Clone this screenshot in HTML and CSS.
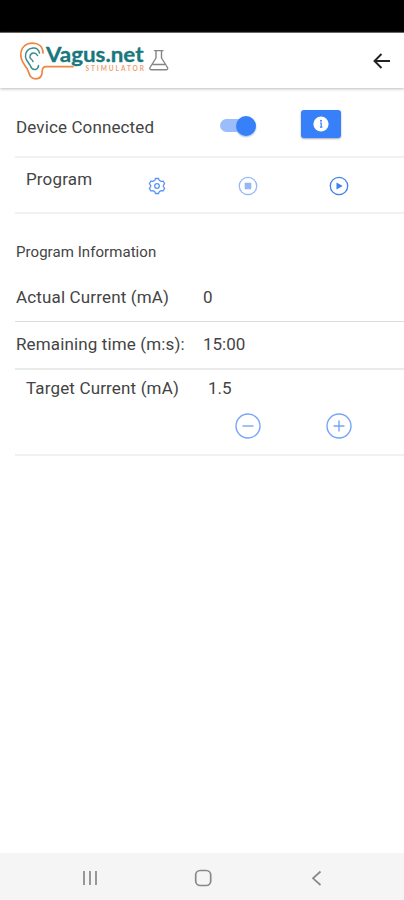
FILE: index.html
```html
<!DOCTYPE html>
<html lang="en">
<head>
<meta charset="utf-8">
<title>Vagus.net Stimulator</title>
<link rel="stylesheet" href="styles.css">
</head>
<body>
<div class="status"></div>
<header class="header">
  <svg class="logo" width="154" height="46" viewBox="18 38 154 46" role="img" aria-label="Vagus.net Stimulator">
    <g fill="none" stroke-linecap="round" stroke-linejoin="round">
      <path stroke="#ee8745" stroke-width="1.7" d="M43 53C43 46.500 38.500 43.200 32.500 43.200C25 43.200 20.800 48 20.800 55C20.800 61 24.500 64.500 27 68.500C29.500 72.500 29 78.800 35.500 78.800C41 78.800 42.200 74.500 42.200 71.500C42.200 68.500 43 66.600 46 66.600H73"/>
      <path stroke="#3b8c91" stroke-width="1.500" d="M39.500 53C38.500 49 36 47.700 33 48C27.500 48.500 25 52.500 25.500 57C26 61 29 62.500 30.500 66C31.500 69 33 70 35.500 69.500C37.500 69 38.500 67.500 38.500 65.500M37.500 55.500C35.500 51.800 31 52.500 30 56C29 59 32 58.500 33 61.500"/>
      <path stroke="#858585" stroke-width="1.400" d="M154.500 50.600H163M156 51V58L150 67.500Q149.200 69.800 151.500 69.800H166Q168.300 69.800 167.500 67.500L161.500 58V51M153 64.500H164.500"/>
    </g>
    <text class="logo-name" x="46" y="61.700" textLength="97.500" lengthAdjust="spacingAndGlyphs">Vagus.net</text>
    <text class="logo-sub" x="85.500" y="70.600" textLength="58.500">STIMULATOR</text>
  </svg>
  <svg class="back" width="18" height="18" viewBox="0 0 18 18"><path d="M17 9H2M8.500 2L1.500 9L8.500 16"/></svg>
</header>
<main>
  <section class="row device">
    <span class="t device-label">Device Connected</span>
    <span class="toggle"><span class="thumb"></span></span>
    <span class="info"><svg width="16" height="16" viewBox="0 0 16 16"><circle cx="8" cy="8" r="7.600" fill="#fff"/><path d="M7 7H8.200V11M7 11.200H9.400" fill="none" stroke="#387ffa" stroke-width="1.200"/><circle cx="8" cy="4.700" r="1" fill="#387ffa"/></svg></span>
  </section>
  <section class="row program">
    <span class="t program-label">Program</span>
    <svg class="icon gear" width="18" height="18" viewBox="0 0 18 18"><path d="M7.500 1.500H10.500L11.300 3.400L13 4.400L15.200 4.200L16.600 6.800L15.300 8.400V9.600L16.600 11.200L15.200 13.800L13 13.600L11.300 14.600L10.500 16.500H7.500L6.700 14.600L5 13.600L2.800 13.800L1.400 11.200L2.700 9.600V8.400L1.400 6.800L2.800 4.200L5 4.400L6.700 3.400Z"/><circle cx="9" cy="9" r="2.300"/></svg>
    <svg class="icon stop" width="20" height="20" viewBox="0 0 20 20"><circle cx="10" cy="10" r="8.700"/><rect class="solid" x="6.700" y="6.700" width="6.600" height="6.600" rx=".7"/></svg>
    <svg class="icon play" width="20" height="20" viewBox="0 0 20 20"><circle cx="10" cy="10" r="8.700"/><path class="solid" d="M7.500 6.400V13.600L13.700 10Z"/></svg>
  </section>
  <h2 class="t heading">Program Information</h2>
  <section class="row actual"><span class="t actual-label">Actual Current (mA)</span><span class="t">0</span></section>
  <section class="row remaining"><span class="t remaining-label">Remaining time (m:s):</span><span class="t time">15:00</span></section>
  <section class="row target">
    <div class="target-line"><span class="t target-label">Target Current (mA)</span><span class="t">1.5</span></div>
    <div class="steps">
      <svg class="icon step" width="26" height="26" viewBox="0 0 26 26"><circle cx="13" cy="13" r="12"/><path d="M7.500 13H18.500"/></svg>
      <svg class="icon step" width="26" height="26" viewBox="0 0 26 26"><circle cx="13" cy="13" r="12"/><path d="M7.500 13H18.500M13 7.500V18.500"/></svg>
    </div>
  </section>
</main>
<nav class="nav">
  <svg width="18" height="18" viewBox="0 0 18 18"><path d="M3 2V16M9 2V16M15 2V16"/></svg>
  <svg width="18" height="18" viewBox="0 0 18 18"><rect x="1.700" y="1.500" width="15" height="15" rx="4.500"/></svg>
  <svg width="18" height="18" viewBox="0 0 18 18"><path d="M13.500 2.500L6 9.300L13.500 16"/></svg>
</nav>
</body>
</html>
```

FILE: styles.css
```css
* { box-sizing: border-box; }
body {
  margin: 0;
  height: 900px;
  display: flex;
  flex-direction: column;
  background: #fff;
  color: #444;
  font-family: Roboto, "Liberation Sans", sans-serif;
  font-size: 17px;
}
svg { display: block; flex: none; }
.status { height: 33px; background: #000; border-bottom: 1px solid #555; }
.header {
  height: 55px;
  display: flex;
  align-items: flex-start;
  justify-content: space-between;
  padding: 5px 13px 0 18px;
  box-shadow: 0 1px 3px #bbb;
}
.logo-name { font-family: Lato, sans-serif; font-weight: 700; font-size: 20px; fill: #19777e; stroke: #19777e; stroke-width: .3px; }
.logo-sub { font-family: Lato, sans-serif; font-weight: 700; font-size: 6.500px; fill: #efa070; }
.back { margin-top: 14px; fill: none; stroke: #222; stroke-width: 1.900; }
main { flex: 1; padding-left: 15px; }
.row { display: flex; border-bottom: 2px solid #f1f1f1; }
.t { line-height: 20px; white-space: nowrap; }
.device { height: 70px; padding-top: 22px; }
.device-label { width: 205px; padding: 7px 0 0 1px; letter-spacing: .12px; }
.toggle { width: 30px; height: 13px; margin: 9px 51px 0 0; border-radius: 7px; background: #9cbdfb; display: flex; align-items: center; }
.thumb { flex: none; width: 20px; height: 20px; margin-left: 16px; border-radius: 50%; background: #3880fa; box-shadow: 0 1px 2px #9db5df; }
.info { width: 40px; height: 28px; border-radius: 3px; background: #3880fa; box-shadow: 0 1px 2px #aab; display: flex; align-items: center; justify-content: center; }
.program { height: 56px; padding: 11px 0 0 11px; }
.program-label { width: 122px; letter-spacing: .15px; }
.icon { fill: none; stroke: #407fec; stroke-width: 1.300; }
.solid { fill: #407fec; stroke: none; }
.gear { margin: 8px 72px 0 0; stroke: #5b93f5; }
.stop { margin: 7px 71px 0 0; opacity: .55; }
.play { margin-top: 7px; }
.heading { margin: 28px 0 0 1px; font-size: 15px; font-weight: 400; letter-spacing: .06px; }
.actual { height: 60px; padding: 25px 0 0 1px; border-bottom: 1px solid #ddd; }
.actual-label { width: 187px; letter-spacing: .15px; }
.remaining { height: 48px; padding: 12px 0 0 1px; border-bottom-color: #eaeaea; }
.remaining-label { width: 187px; letter-spacing: .13px; }
.target { height: 86px; padding: 8px 0 0 11px; flex-direction: column; }
.target-line { display: flex; }
.target-label { width: 182px; letter-spacing: .15px; }
.steps { display: flex; gap: 65px; padding: 15px 0 0 209px; }
.step { stroke: #75a5f8; stroke-width: 1.400; }
.nav {
  height: 47px;
  display: flex;
  align-items: center;
  gap: 95px;
  padding: 3px 0 0 81px;
  background: #f5f5f5;
}
.nav svg { fill: none; stroke: #888; stroke-width: 1.700; }
```
